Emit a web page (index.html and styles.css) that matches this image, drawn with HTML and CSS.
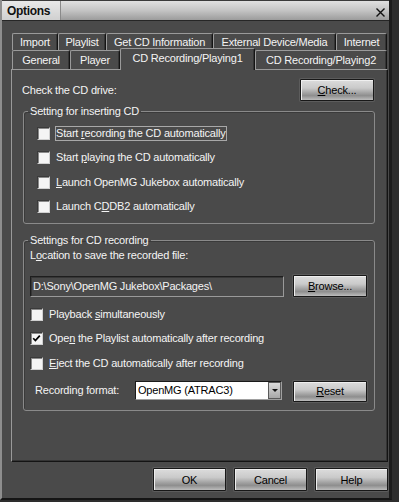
FILE: index.html
```html
<!DOCTYPE html>
<html lang="en">
<head>
    <meta charset="UTF-8">
    <meta name="viewport" content="width=device-width, initial-scale=1.0">
    <title>Options</title>
    <link rel="stylesheet" href="styles.css">
</head>
<body>
    <div class="window">
        <div class="titlebar">
            <span class="title">Options</span>
            <button class="close" aria-label="Close">
                <svg width="11" height="11" viewBox="0 0 11 11">
                    <path d="M1.5 1.5 L9.5 9.5 M9.5 1.5 L1.5 9.5" stroke="#111" stroke-width="1.4" fill="none"/>
                </svg>
            </button>
        </div>

        <div class="tabs">
            <div class="tab-row row-back">
                <div class="tab">Import</div>
                <div class="tab">Playlist</div>
                <div class="tab">Get CD Information</div>
                <div class="tab">External Device/Media</div>
                <div class="tab">Internet</div>
            </div>
            <div class="tab-row row-front">
                <div class="tab">General</div>
                <div class="tab">Player</div>
                <div class="tab active">CD Recording/Playing1</div>
                <div class="tab">CD Recording/Playing2</div>
            </div>
        </div>

        <div class="panel">
            <div class="drive-row">
                <span>Check the CD drive:</span>
                <button class="btn"><u>C</u>heck...</button>
            </div>

            <fieldset class="group">
                <legend>Setting for inserting CD</legend>
                <div class="group-body insert-body">
                    <label class="check focus"><span class="box"></span><span class="check-text">Start <u>r</u>ecording the CD automatically</span></label>
                    <label class="check"><span class="box"></span><span class="check-text">Start <u>p</u>laying the CD automatically</span></label>
                    <label class="check"><span class="box"></span><span class="check-text"><u>L</u>aunch OpenMG Jukebox automatically</span></label>
                    <label class="check"><span class="box"></span><span class="check-text">Launch C<u>D</u>DB2 automatically</span></label>
                </div>
            </fieldset>

            <fieldset class="group group-record">
                <legend>Settings for CD recording</legend>
                <div class="group-body record-body">
                    <div class="field-label">L<u>o</u>cation to save the recorded file:</div>
                    <div class="path-row">
                        <div class="textbox">D:\Sony\OpenMG Jukebox\Packages\</div>
                        <button class="btn"><u>B</u>rowse...</button>
                    </div>
                    <div class="record-checks">
                        <label class="check"><span class="box"></span><span class="check-text">Playback <u>s</u>imultaneously</span></label>
                        <label class="check"><span class="box">
                            <svg width="9" height="9" viewBox="0 0 9 9"><path d="M1.2 4.2 L3.4 6.6 L7.8 1.6" stroke="#000" stroke-width="1.7" fill="none"/></svg>
                        </span><span class="check-text">Ope<u>n</u> the Playlist automatically after recording</span></label>
                        <label class="check"><span class="box"></span><span class="check-text"><u>E</u>ject the CD automatically after recording</span></label>
                    </div>
                    <div class="format-row">
                        <span class="format-label">Recording format:</span>
                        <div class="combo">
                            <span class="combo-value">OpenMG (ATRAC3)</span>
                            <span class="combo-arrow"></span>
                        </div>
                        <button class="btn btn-reset"><u>R</u>eset</button>
                    </div>
                </div>
            </fieldset>
        </div>

        <div class="footer">
            <button class="btn btn-footer">OK</button>
            <button class="btn btn-footer">Cancel</button>
            <button class="btn btn-footer">Help</button>
        </div>
    </div>
</body>
</html>
```

FILE: styles.css
```css
* {
    margin: 0;
    padding: 0;
    box-sizing: border-box;
}

html,
body {
    width: 399px;
    height: 502px;
    overflow: hidden;
}

body {
    background: #2d2d2d;
    font-family: "Liberation Sans", Arial, sans-serif;
    font-size: 11px;
    letter-spacing: -0.2px;
    color: #f4f4f4;
}

u {
    text-underline-offset: 1px;
}

.window {
    width: 392px;
    height: 500px;
    background: #4a4a4a;
    border-left: 2px solid #8e8e8e;
    border-right: 3px solid #1c1c1c;
    border-bottom: 2px solid #151515;
}

/* title bar */

.titlebar {
    height: 21px;
    display: flex;
    align-items: center;
    justify-content: space-between;
    background: linear-gradient(#e0e0e0, #c4c4c4 50%, #9c9c9c);
    border-top: 1px solid #3a3a3a;
    border-bottom: 1px solid #262626;
}

.title {
    height: 100%;
    width: 58px;
    display: flex;
    align-items: center;
    padding-left: 5px;
    background: linear-gradient(#e8e8e8, #d0d0d0);
    box-shadow: 1px 0 0 #8a8a8a;
    font-size: 12px;
    font-weight: bold;
    letter-spacing: -0.3px;
    color: #111;
}

.close {
    display: flex;
    border: none;
    background: none;
    margin: 4px 3px 0 0;
}

/* tabs */

.tabs {
    padding: 12px 0 0 10px;
}

.tab-row {
    display: grid;
}

.row-back {
    grid-template-columns: 46px 48px 107px 123px 51px;
    grid-template-rows: 17px;
}

.row-front {
    grid-template-columns: 58px 50px 135px 132px;
    grid-template-rows: 19px;
}

.tab {
    display: flex;
    align-items: center;
    justify-content: center;
    white-space: nowrap;
    background: #4a4a4a;
    border: 1px solid #9a9a9a;
    border-bottom: none;
    border-right-color: #141414;
    border-radius: 2px 2px 0 0;
    box-shadow: inset -1px 0 #343434;
}

.tab.active {
    position: relative;
    z-index: 1;
    height: 22px;
    margin-top: -2px;
    padding-bottom: 3px;
}

/* panel */

.panel {
    margin-left: 9px;
    width: 377px;
    height: 393px;
    border: 1px solid;
    border-color: #9a9a9a #141414 #141414 #9a9a9a;
    box-shadow: inset -1px -1px #343434;
}

.drive-row {
    display: flex;
    align-items: center;
    justify-content: space-between;
    margin-top: 9px;
    padding: 0 13px 0 10px;
}

.btn {
    width: 74px;
    height: 22px;
    font: inherit;
    letter-spacing: inherit;
    color: #000;
    border: 1px solid #181818;
    border-radius: 1px;
    background: linear-gradient(#dcdcdc, #cacaca 40%, #a0a0a0 66%, #8e8e8e 78%, #bcbcbc);
    box-shadow: inset 1px 1px #efefef, 0 0 0 1px #5c5c5c;
}

.group {
    margin: 3px 12px 0 11px;
    padding: 0;
    min-width: 0;
    border: 1px solid #8a8a8a;
    border-radius: 3px;
    box-shadow: inset 1px 1px #3a3a3a;
}

.group legend {
    margin-left: 4px;
    padding: 0 2px;
    line-height: 14px;
}

.group-record {
    margin-top: 9px;
}

.insert-body {
    padding: 3px 0 4px 13px;
}

.record-body {
    padding: 2px 7px 8px 6px;
}

.check {
    display: flex;
    align-items: center;
    height: 24.5px;
}

.box {
    flex: none;
    width: 13px;
    height: 13px;
    margin-right: 5px;
    display: flex;
    align-items: center;
    justify-content: center;
    background: #f4f4f4;
    border: 1px solid;
    border-color: #3a3a3a #d0d0d0 #d0d0d0 #3a3a3a;
    box-shadow: inset 1px 1px #8a8a8a;
}

.check-text {
    line-height: 13px;
    border: 1px solid transparent;
    white-space: nowrap;
}

.focus .check-text {
    border-color: #a8a8a8;
}

.field-label {
    line-height: 13px;
}

.path-row {
    display: flex;
    align-items: center;
    margin-top: 13px;
}

.textbox {
    width: 254px;
    height: 21px;
    line-height: 19px;
    padding-left: 2px;
    white-space: nowrap;
    border: 1px solid;
    border-color: #1e1e1e #9a9a9a #9a9a9a #1e1e1e;
    box-shadow: inset 1px 1px #363636;
}

.path-row .btn,
.format-row .btn {
    margin-left: auto;
}

.record-checks {
    margin-top: 5px;
}

.format-row {
    display: flex;
    align-items: flex-start;
    margin-top: 5px;
}

.format-label {
    width: 100px;
    margin-left: 5px;
    line-height: 19px;
}

.combo {
    width: 147px;
    height: 19px;
    display: flex;
    background: #fff;
    border: 1px solid;
    border-color: #1a1a1a #a0a0a0 #a0a0a0 #1a1a1a;
}

.combo-value {
    flex: 1;
    color: #000;
    padding-left: 2px;
    line-height: 17px;
}

.combo-arrow {
    width: 13px;
    display: flex;
    align-items: center;
    justify-content: center;
    background: linear-gradient(#dadada, #a8a8a8);
    border: 1px solid #5a5a5a;
}

.combo-arrow::after {
    content: "";
    border-left: 3px solid transparent;
    border-right: 3px solid transparent;
    border-top: 3px solid #111;
}

.btn-reset {
    height: 21px;
}

/* footer */

.footer {
    display: flex;
    justify-content: flex-end;
    gap: 8px;
    margin-top: 6px;
    padding-right: 1px;
}

.btn-footer {
    width: 73px;
    height: 23px;
}
```
